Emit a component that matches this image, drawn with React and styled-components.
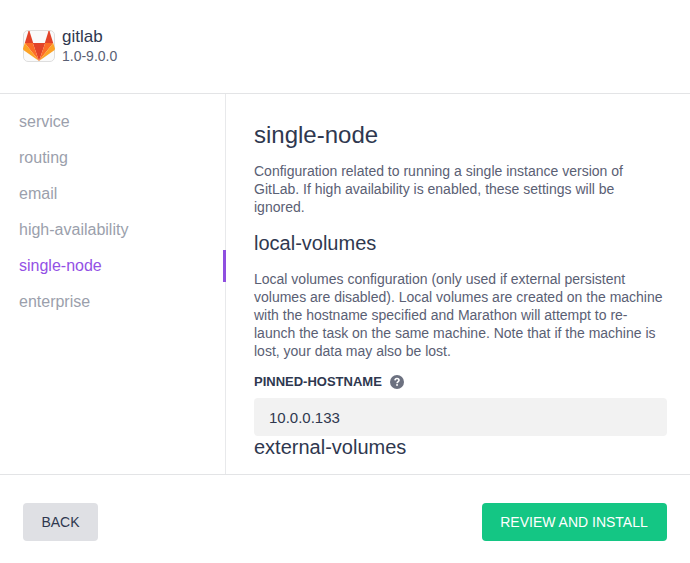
import React from "react";
import styled, { createGlobalStyle } from "styled-components";

const GlobalStyle = createGlobalStyle`
  * { box-sizing: border-box; }
  body {
    margin: 0;
    background: #fff;
    color: #2f384f;
    font-family: "Liberation Sans", Arial, sans-serif;
  }
`;

const Page = styled.div`
  display: flex;
  flex-direction: column;
  height: 563px;
  overflow: hidden;
`;

const Header = styled.header`
  display: flex;
  flex: none;
  gap: 7px;
  height: 94px;
  padding: 26px 23px 0;
  border-bottom: 1px solid #e3e4e6;
`;

const Logo = styled.svg`
  display: block;
  width: 32px;
  height: 32px;
  margin-top: 4px;
`;

const PackageName = styled.div`
  font-size: 17px;
  line-height: 21px;
`;

const PackageVersion = styled.div`
  font-size: 14px;
  line-height: 18px;
  color: #5a6074;
`;

const Body = styled.div`
  display: flex;
  flex: 1;
  min-height: 0;
`;

const Sidebar = styled.nav`
  display: flex;
  flex: none;
  flex-direction: column;
  gap: 4px;
  width: 226px;
  padding-top: 12px;
  border-right: 1px solid #e8e9eb;
`;

const NavItem = styled.a`
  height: 32px;
  margin-right: -1px;
  padding-left: 19px;
  border-right: 3px solid ${(p) => (p.$active ? "#8f4fe0" : "transparent")};
  color: ${(p) => (p.$active ? "#9351e5" : "#9b9fac")};
  font-size: 16px;
  line-height: 32px;
`;

const Content = styled.main`
  flex: 1;
  overflow: hidden;
  padding: 26px 23px 0 28px;
`;

const Title = styled.h1`
  margin: 0 0 12px;
  font-size: 24px;
  font-weight: 400;
  line-height: 30px;
`;

const SectionTitle = styled.h2`
  margin: 0;
  font-size: 20px;
  font-weight: 400;
  line-height: ${(p) => (p.$compact ? 22 : 24)}px;
`;

const Description = styled.p`
  margin: 0 0 ${(p) => p.$gap}px;
  color: #5a6074;
  font-size: 14px;
  line-height: 18px;
`;

const Section = styled.section`
  display: flex;
  flex-direction: column;
  gap: 15px;
`;

const FieldLabel = styled.label`
  display: flex;
  align-items: center;
  gap: 8px;
  height: 16px;
  margin-bottom: 8px;
  font-size: 13px;
  font-weight: 700;
  line-height: 14px;
`;

const HelpIcon = styled.svg`
  width: 14px;
  height: 14px;
`;

const TextInput = styled.input`
  display: block;
  width: 100%;
  height: 38px;
  padding: 0 15px;
  border: 0;
  border-radius: 4px;
  outline: 0;
  background: #f2f2f2;
  color: #2f384f;
  font: 15px "Liberation Sans", Arial, sans-serif;
`;

const Footer = styled.footer`
  display: flex;
  flex: none;
  justify-content: space-between;
  height: 89px;
  padding: 28px 23px 0;
  border-top: 1px solid #e3e4e6;
`;

const Button = styled.button`
  width: ${(p) => (p.$primary ? 185 : 75)}px;
  height: 38px;
  padding: 0 ${(p) => (p.$primary ? 1 : 0)}px 0 0;
  border: 0;
  border-radius: 4px;
  background: ${(p) => (p.$primary ? "#14c684" : "#dfe0e4")};
  color: ${(p) => (p.$primary ? "#fff" : "#2f384f")};
  font: 14px "Liberation Sans", Arial, sans-serif;
`;

const sections = ["service", "routing", "email", "high-availability", "single-node", "enterprise"];

function GitlabLogo() {
  return (
    <Logo viewBox="0 0 32 32">
      <rect x=".5" y=".5" width="31" height="31" rx="4.5" fill="#fafafa" stroke="#dedede" />
      <path d="M16 31 9.8 13h12.4z" fill="#e24329" />
      <path d="M16 31 1.8 13h8z" fill="#fc6d26" />
      <path d="M16 31 30.2 13h-8z" fill="#fc6d26" />
      <path d="M1.8 13 .1 18.2q-.4 1.2.6 2L16 31z" fill="#fca326" />
      <path d="m30.2 13 1.7 5.2q.4 1.2-.6 2L16 31z" fill="#fca326" />
      <path d="M1.8 13 5.5 1.3q.5-.9 1 0L10.2 13z" fill="#e24329" />
      <path d="M30.2 13 26.5 1.3q-.5-.9-1 0L21.8 13z" fill="#e24329" />
    </Logo>
  );
}

function Help() {
  return (
    <HelpIcon viewBox="0 0 14 14">
      <circle cx="7" cy="7" r="7" fill="#6c7180" />
      <path d="M5 5.4C5.1 4 5.9 3.5 7 3.5s2 .6 2 1.7C9 6.5 7.1 6.6 7.1 8.2" fill="none" stroke="#fff" strokeWidth="1.6" />
      <rect x="6.2" y="9.1" width="1.7" height="1.7" fill="#fff" />
    </HelpIcon>
  );
}

export default function App() {
  return (
    <Page>
      <GlobalStyle />
      <Header>
        <GitlabLogo />
        <div>
          <PackageName>gitlab</PackageName>
          <PackageVersion>1.0-9.0.0</PackageVersion>
        </div>
      </Header>
      <Body>
        <Sidebar>
          {sections.map((name) => (
            <NavItem key={name} $active={name === "single-node"}>{name}</NavItem>
          ))}
        </Sidebar>
        <Content>
          <Title>single-node</Title>
          <Description $gap={15}>
            Configuration related to running a single instance version of GitLab. If high availability is enabled, these settings will be ignored.
          </Description>
          <Section>
            <SectionTitle>local-volumes</SectionTitle>
            <Description $gap={-1}>
              Local volumes configuration (only used if external persistent volumes are disabled). Local volumes are created on the machine with the hostname specified and Marathon will attempt to re-launch the task on the same machine. Note that if the machine is lost, your data may also be lost.
            </Description>
            <div>
              <FieldLabel htmlFor="pinned-hostname"><span>PINNED-HOSTNAME</span><Help /></FieldLabel>
              <TextInput id="pinned-hostname" defaultValue="10.0.0.133" />
              <SectionTitle $compact>external-volumes</SectionTitle>
            </div>
          </Section>
        </Content>
      </Body>
      <Footer>
        <Button>BACK</Button>
        <Button $primary>REVIEW AND INSTALL</Button>
      </Footer>
    </Page>
  );
}
